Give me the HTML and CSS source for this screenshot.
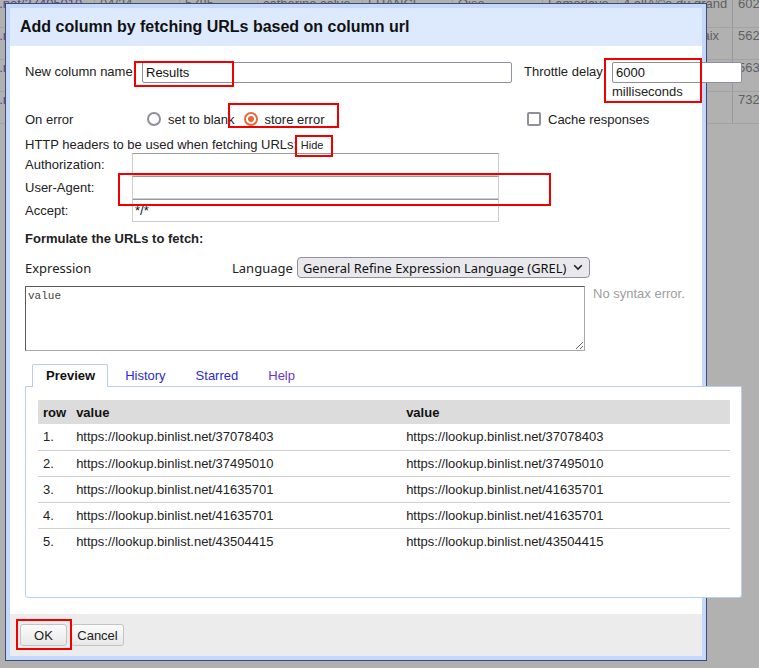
FILE: index.html
```html
<!DOCTYPE html>
<html>
<head>
<meta charset="utf-8">
<title>Add column by fetching URLs</title>
<link rel="stylesheet" href="styles.css">
</head>
<body>
<div class="sheet">
  <div class="srow">
    <div class="c c1 link">https://lookup.binlist.net/37495010</div>
    <div class="c c2">04/24</div>
    <div class="c c3">5785</div>
    <div class="c c4">catherine.calve</div>
    <div class="c c5">FRANCE</div>
    <div class="c c6">Oise</div>
    <div class="c c7">Lamorlaye</div>
    <div class="c c8">4 allÃ©e du grand</div>
    <div class="c c9">6020</div>
  </div>
  <div class="srow">
    <div class="c c1 link">https://lookup.binlist.net/41635701</div>
    <div class="c c2">11/25</div>
    <div class="c c3">3342</div>
    <div class="c c4">marc.dupont</div>
    <div class="c c5">FRANCE</div>
    <div class="c c6">Paris</div>
    <div class="c c7">Paris</div>
    <div class="c c8">12 rue de la paix</div>
    <div class="c c9">5625</div>
  </div>
  <div class="srow">
    <div class="c c1 link">https://lookup.binlist.net/41635701</div>
    <div class="c c2">08/23</div>
    <div class="c c3">1290</div>
    <div class="c c4">julie.martin</div>
    <div class="c c5">FRANCE</div>
    <div class="c c6">Rhône</div>
    <div class="c c7">Lyon</div>
    <div class="c c8">8 place Bellecour</div>
    <div class="c c9">5632</div>
  </div>
  <div class="srow">
    <div class="c c1 link">https://lookup.binlist.net/43504415</div>
    <div class="c c2">02/26</div>
    <div class="c c3">7781</div>
    <div class="c c4">pierre.leroy</div>
    <div class="c c5">FRANCE</div>
    <div class="c c6">Gironde</div>
    <div class="c c7">Bordeaux</div>
    <div class="c c8">3 cours Victor</div>
    <div class="c c9">7320</div>
  </div>
</div>

<div class="dialog">
  <div class="dlg-title">Add column by fetching URLs based on column url</div>
  <div class="dlg-body">
    <div class="r-name">
      <label class="lbl-name">New column name</label>
      <input class="field in-name" type="text" value="Results">
      <label class="lbl-throttle">Throttle delay</label>
      <div class="throttle">
        <input class="field in-throttle" type="text" value="6000">
        <div class="ms">milliseconds</div>
      </div>
    </div>

    <div class="r-error">
      <span class="lbl-error">On error</span>
      <div class="radios">
        <label class="opt opt-first"><input type="radio" name="onerr" class="radio"><span>set to blank</span></label>
        <label class="opt"><input type="radio" name="onerr" class="radio" checked><span>store error</span></label>
      </div>
      <label class="opt"><input type="checkbox" class="check"><span>Cache responses</span></label>
    </div>

    <div class="r-htitle">HTTP headers to be used when fetching URLs: <span class="hide">Hide</span></div>
    <div class="headers">
      <label class="hlabel">Authorization:</label><input class="hinput" type="text" value="">
      <label class="hlabel">User-Agent:</label><input class="hinput" type="text" value="">
      <label class="hlabel">Accept:</label><input class="hinput" type="text" value="*/*">
    </div>

    <div class="section">Formulate the URLs to fetch:</div>

    <div class="r-expr">
      <span class="lbl-expr">Expression</span>
      <span class="lbl-lang">Language</span>
      <div class="select-wrap">
        <select class="select">
          <option>General Refine Expression Language (GREL)</option>
        </select>
        <svg class="chev" width="10" height="7" viewBox="0 0 10 7"><path d="M1.2 1.2 L5 5 L8.8 1.2" fill="none" stroke="#222" stroke-width="1.6"/></svg>
      </div>
    </div>

    <div class="r-text">
      <textarea class="expr">value</textarea>
      <div class="status">No syntax error.</div>
    </div>

    <div class="tabs">
      <span class="tab active">Preview</span>
      <span class="tab">History</span>
      <span class="tab">Starred</span>
      <span class="tab visited">Help</span>
    </div>
    <div class="panel">
      <table class="preview">
        <colgroup><col class="col-row"><col class="col-val"><col></colgroup>
        <thead>
          <tr><th>row</th><th>value</th><th>value</th></tr>
        </thead>
        <tbody>
          <tr><td>1.</td><td>https://lookup.binlist.net/37078403</td><td>https://lookup.binlist.net/37078403</td></tr>
          <tr><td>2.</td><td>https://lookup.binlist.net/37495010</td><td>https://lookup.binlist.net/37495010</td></tr>
          <tr><td>3.</td><td>https://lookup.binlist.net/41635701</td><td>https://lookup.binlist.net/41635701</td></tr>
          <tr><td>4.</td><td>https://lookup.binlist.net/41635701</td><td>https://lookup.binlist.net/41635701</td></tr>
          <tr><td>5.</td><td>https://lookup.binlist.net/43504415</td><td>https://lookup.binlist.net/43504415</td></tr>
        </tbody>
      </table>
    </div>
  </div>
  <div class="dlg-footer">
    <button class="btn ok">OK</button>
    <button class="btn cancel">Cancel</button>
  </div>
</div>

<div class="mark m-name"></div>
<div class="mark m-throttle"></div>
<div class="mark m-store"></div>
<div class="mark m-hide"></div>
<div class="mark m-agent"></div>
<div class="mark m-ok"></div>
</body>
</html>
```

FILE: styles.css
```css
* { box-sizing: border-box; }

html, body {
  margin: 0;
  height: 100%;
  overflow: hidden;
}

body {
  position: relative;
  background: #b1b1b1;
  font-family: "Liberation Sans", Arial, sans-serif;
  font-size: 13px;
  color: #222;
}

/* background sheet (dimmed by modal overlay) */
.sheet {
  margin-left: -120px;
  margin-top: -4px;
}
.srow {
  display: flex;
  height: 32px;
  border-bottom: 1px solid #a3a3a3;
}
.c {
  flex: none;
  height: 100%;
  padding: 0 5px;
  line-height: 16px;
  white-space: nowrap;
  overflow: hidden;
  color: #606060;
  border-right: 1px solid #a3a3a3;
}
.c1 { width: 215px; }
.c2 { width: 85px; }
.c3 { width: 78px; }
.c4 { width: 105px; }
.c5 { width: 90px; }
.c6 { width: 90px; }
.c7 { width: 75px; }
.c8 { width: 115px; border-right-color: #999; }
.c9 { width: 80px; }
.link { color: #54478f; }

/* dialog */
.dialog {
  position: absolute;
  left: 5px;
  top: 3px;
  width: 702px;
  height: 658px;
  border: 1px solid #3e4e6a;
  background: #c3d8fc;
  padding: 4px;
  display: flex;
  flex-direction: column;
}
.dlg-title {
  flex: none;
  height: 38px;
  background: #dde9fc;
  padding-left: 10px;
  font-weight: bold;
  font-size: 16px;
  line-height: 38px;
  color: #111;
  white-space: nowrap;
}
.dlg-body {
  flex: none;
  height: 568px;
  background: #fff;
  padding: 16px 0 0 15px;
}
.dlg-footer {
  flex: none;
  height: 42px;
  background: #ececec;
  padding: 10px 0 0 10px;
  display: flex;
  gap: 4px;
  align-items: flex-start;
}

.field {
  height: 21px;
  border: 1px solid #8f8f9d;
  border-radius: 2px;
  padding: 0 3px;
  font: 13px "Liberation Sans", Arial, sans-serif;
  color: #111;
  background: #fff;
}

/* row: name + throttle */
.r-name {
  display: flex;
  align-items: flex-start;
}
.lbl-name {
  flex: none;
  width: 117px;
  line-height: 19px;
}
.in-name {
  flex: none;
  width: 370px;
}
.lbl-throttle {
  flex: none;
  width: 88px;
  margin-left: 12px;
  line-height: 19px;
}
.throttle {
  flex: none;
  width: 130px;
}
.in-throttle { width: 130px; }
.ms { line-height: 17px; }

/* row: on error */
.r-error {
  display: flex;
  align-items: center;
  margin-top: 9px;
  height: 20px;
}
.lbl-error {
  flex: none;
  width: 122px;
}
.radios {
  flex: none;
  width: 380px;
  display: flex;
}
.opt {
  display: inline-flex;
  align-items: center;
  gap: 7px;
  white-space: nowrap;
}
.opt-first { margin-right: 9px; }

.radio {
  appearance: none;
  -webkit-appearance: none;
  margin: 0;
  width: 14px;
  height: 14px;
  border: 2px solid #8f8f9d;
  border-radius: 50%;
  background: #fff;
}
.radio:checked {
  border-color: #e8683c;
  background: radial-gradient(circle, #e8683c 0 2.6px, #fff 3.4px);
}
.check {
  appearance: none;
  -webkit-appearance: none;
  margin: 0;
  width: 14px;
  height: 14px;
  border: 2px solid #8f8f9d;
  border-radius: 2px;
  background: #fff;
}

/* headers */
.r-htitle {
  margin-top: 8px;
  line-height: 16px;
  white-space: nowrap;
}
.hide { font-size: 11px; }

.headers {
  display: grid;
  grid-template-columns: 107px 367px;
  grid-auto-rows: 23px;
  align-items: center;
}
.hinput {
  height: 23px;
  border: 1px solid #cdcdcd;
  border-top-color: #9a9a9a;
  padding: 0 2px;
  font: 13px "Liberation Sans", Arial, sans-serif;
  color: #111;
  background: #fff;
}

.section {
  margin-top: 9px;
  font-weight: bold;
  line-height: 16px;
}

/* expression */
.r-expr {
  display: flex;
  align-items: center;
  margin-top: 10px;
  height: 21px;
  font-family: "Noto Sans", "Open Sans", sans-serif;
}
.lbl-expr { flex: none; width: 207px; }
.lbl-lang { flex: none; width: 65px; }
.select-wrap {
  position: relative;
  flex: none;
  width: 293px;
  height: 21px;
}
.select {
  appearance: none;
  -webkit-appearance: none;
  width: 100%;
  height: 21px;
  margin: 0;
  padding: 0 20px 0 5px;
  border: 1px solid #8f8f9d;
  border-radius: 4px;
  background: #e9e9ed;
  color: #111;
  font: 12.85px "Noto Sans", "Open Sans", sans-serif;
}
.chev {
  position: absolute;
  right: 7px;
  top: 7px;
  pointer-events: none;
}

.r-text {
  display: flex;
  gap: 8px;
  margin-top: 8px;
}
.expr {
  flex: none;
  width: 560px;
  height: 65px;
  margin: 0;
  padding: 3px 2px;
  border: 1px solid;
  border-color: #5a5a5a #a8a8a8 #a8a8a8 #5a5a5a;
  font: 11px/13px "Liberation Mono", "Courier New", monospace;
  color: #444;
  resize: both;
}
.status {
  color: #9d9d9d;
  line-height: 16px;
  white-space: nowrap;
}

/* tabs */
.tabs {
  position: relative;
  z-index: 1;
  display: flex;
  margin-top: 13px;
  padding-left: 7px;
  height: 22px;
}
.tab {
  height: 22px;
  padding: 0 12px 0 13px;
  margin-right: 3px;
  line-height: 21px;
  border: 1px solid transparent;
  border-bottom: none;
  color: #2b2bd2;
  white-space: nowrap;
}
.tab.visited { color: #6b35d6; }
.tab.active {
  height: 23px;
  border-color: #b7cdf5;
  background: #fff;
  color: #111;
  font-weight: bold;
  border-radius: 2px 2px 0 0;
}

.panel {
  width: 717px;
  height: 212px;
  border: 1px solid #b7cdf5;
  border-radius: 0 0 3px 3px;
  background: #fff;
  padding: 13px 11px 0 12px;
}
.preview {
  width: 100%;
  border-collapse: collapse;
}
.col-row { width: 32px; }
.col-val { width: 330px; }
.preview th {
  height: 24px;
  padding: 0 5px;
  background: #dcdcdc;
  text-align: left;
  font-weight: bold;
  color: #111;
}
.preview td {
  height: 26px;
  padding: 0 5px;
  border-bottom: 1px solid #cfcfcf;
  color: #222;
  white-space: nowrap;
}
.preview tbody tr:last-child td { border-bottom: none; }

/* buttons */
.btn {
  height: 22px;
  margin: 0;
  padding: 0;
  border: 1px solid #c4c4c4;
  border-radius: 3px;
  background: linear-gradient(#fbfbfb, #e8e8e8);
  font: 13px "Liberation Sans", Arial, sans-serif;
  color: #222;
}
.ok { width: 47px; }
.cancel { width: 53px; }

/* red annotation boxes */
.mark {
  position: absolute;
  border: 2px solid #f20000;
  pointer-events: none;
}
.m-name { left: 134px; top: 61px; width: 100px; height: 26px; }
.m-throttle { left: 604px; top: 58px; width: 98px; height: 45px; }
.m-store { left: 228px; top: 103px; width: 111px; height: 25px; }
.m-hide { left: 295px; top: 135px; width: 38px; height: 22px; }
.m-agent { left: 118px; top: 173px; width: 433px; height: 33px; }
.m-ok { left: 16px; top: 619px; width: 56px; height: 31px; }
```
